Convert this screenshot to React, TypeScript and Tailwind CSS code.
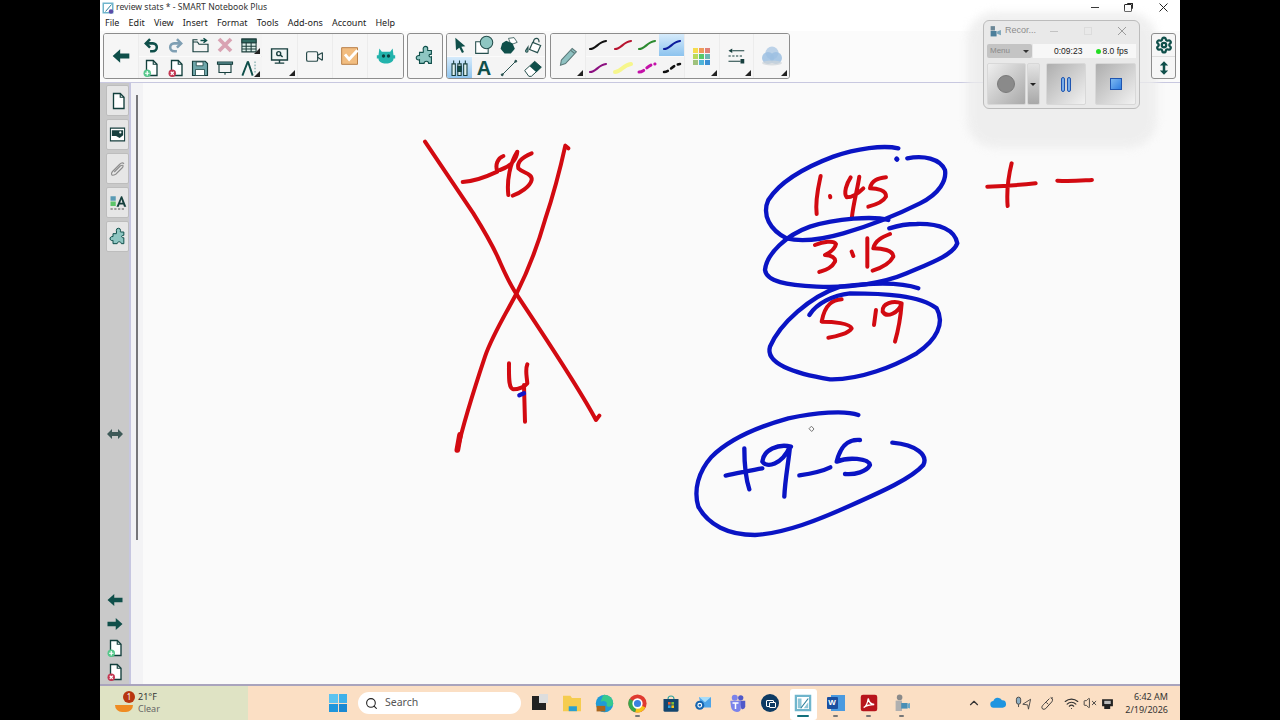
import { ChevronUp, Search, Settings, Video, VolumeX, Wifi } from "lucide-react";
import type { ReactNode } from "react";

const DARK = "#0f4f4a";
const LIGHT = "#8ec6c2";

function Corner() {
  return (
    <span className="absolute right-[2px] bottom-[2px] h-0 w-0 [border-top:6px_solid_transparent] [border-right:6px_solid_#222]" />
  );
}

function Cell({ children, corner, active }: { children: ReactNode; corner?: boolean; active?: boolean }) {
  return (
    <div
      className={
        "relative flex h-[22px] w-[25px] items-center justify-center " +
        (active ? "bg-gradient-to-b from-[#d6ebfb] to-[#8cc3ee]" : "bg-[#f4f4f4]")
      }
    >
      {children}
      {corner && <Corner />}
    </div>
  );
}

function BigCell({ children, corner, w = "w-[35px]" }: { children: ReactNode; corner?: boolean; w?: string }) {
  return (
    <div className={"relative flex h-full items-center justify-center border-r border-[#ececec] bg-[#f6f6f6] last:border-r-0 " + w}>
      {children}
      {corner && <Corner />}
    </div>
  );
}

function Arrow({ size = 18, flip = false }: { size?: number; flip?: boolean }) {
  return (
    <svg width={size} height={size} viewBox="0 0 24 24" className={flip ? "-scale-x-100" : ""}>
      <path d="M2 12 11 4v5h11v6H11v5z" fill={DARK} />
    </svg>
  );
}

function Undo({ color }: { color: string }) {
  return (
    <svg width="17" height="17" viewBox="0 0 24 24" fill="none" stroke={color} strokeWidth="3.6">
      <path d="M10 3 4 9l6 6" />
      <path d="M4 9h10a5.500 5.500 0 0 1 0 11h-4" />
    </svg>
  );
}

function Page({ badge }: { badge?: "add" | "del" }) {
  return (
    <svg width="18" height="18" viewBox="0 0 24 24" fill="none">
      <path d="M6 2h9l5 5v15H6z" fill="#fff" stroke="#123f3c" strokeWidth="1.800" />
      <path d="M15 2v5h5" stroke="#123f3c" strokeWidth="1.500" />
      {badge === "add" && <circle cx="7" cy="19" r="5" fill="#55c78a" />}
      {badge === "add" && <path d="M4 19h6M7 16v6" stroke="#fff" strokeWidth="1.600" />}
      {badge === "del" && <circle cx="7" cy="19" r="5" fill="#c43752" />}
      {badge === "del" && <path d="m5 17 4 4m0-4-4 4" stroke="#fff" strokeWidth="1.600" />}
    </svg>
  );
}

function Puzzle({ size = 22 }: { size?: number }) {
  return (
    <svg width={size} height={size} viewBox="0 0 24 24">
      <path
        d="M10 4a2.500 2.500 0 0 1 5 0c0 1-.5 1.500 0 2h4v4c-1 .6-2-.5-2.600 1-.4 1.500 1.600 2.500 2.600 1.800V20h-3c0-3-5-3-5 0H6v-4c-1 .5-3 .5-3.500-1.500S4 11 6 11.500V8h4c.5-1.500 0-2.500 0-4z"
        fill={LIGHT}
        stroke={DARK}
        strokeWidth="1.200"
      />
    </svg>
  );
}

function Stroke({ color, width = 2.2, dash }: { color: string; width?: number; dash?: string }) {
  return (
    <svg width="20" height="14" viewBox="0 0 20 14" fill="none">
      <path d="M2 11C8 11 10 4 18 3" stroke={color} strokeWidth={width} strokeDasharray={dash} strokeLinecap="round" />
    </svg>
  );
}

function Palette() {
  const colors = ["#f6dc4c", "#ee9a5a", "#df8079", "#b9d95a", "#55c96a", "#6cb6b4", "#9fc27c", "#4fb3d8", "#3b8fd4"];
  return (
    <div className="grid grid-cols-3 gap-[1px]">
      {colors.map((c) => (
        <span key={c} className="h-[5px] w-[5px]" style={{ backgroundColor: c }} />
      ))}
    </div>
  );
}

function TopToolbar() {
  return (
    <div className="flex h-[51px] items-start bg-[#fbfbfb] pt-[2px] pl-[3px]">
      <div className="flex h-[46px] w-[301px] overflow-hidden rounded-[3px] border border-[#8d8d8d]">
        <BigCell>
          <Arrow size={20} />
        </BigCell>
        <div className="grid w-[125px] grid-cols-5 gap-y-[1px] border-r border-[#ececec]">
          <Cell>
            <Undo color={DARK} />
          </Cell>
          <Cell>
            <span className="-scale-x-100">
              <Undo color="#7f9fb3" />
            </span>
          </Cell>
          <Cell>
            <svg width="19" height="18" viewBox="0 0 24 24" fill="none" stroke="#173f3e" strokeWidth="1.600">
              <path d="M2 8h6l2 3h12v10H2zM2 8V5h6" />
              <path d="M12 6h7m-3-3 4 3-4 3" stroke={DARK} strokeWidth="2" />
            </svg>
          </Cell>
          <Cell>
            <svg width="18" height="18" viewBox="0 0 24 24" stroke="#d9a2b2" strokeWidth="5">
              <path d="m4 4 16 16M20 4 4 20" />
            </svg>
          </Cell>
          <Cell corner>
            <svg width="18" height="17" viewBox="0 0 24 24" fill="none" stroke="#1d3f3c" strokeWidth="1.500">
              <path d="M2 3h20v18H2z" fill="#dceee9" />
              <path d="M2 8h20M2 13h20M2 17h20M8 3v18M15 3v18" />
              <path d="M2 3h20v5H2z" fill="#2f6b62" />
            </svg>
          </Cell>
          <Cell>
            <Page badge="add" />
          </Cell>
          <Cell>
            <Page badge="del" />
          </Cell>
          <Cell>
            <svg width="18" height="18" viewBox="0 0 24 24">
              <path d="M2 3h17l3 3v16H2z" fill="#6fa6aa" stroke="#173f3e" strokeWidth="1.500" />
              <path d="M7 4h9v5H7zM6 14h12v8H6z" fill="#fff" stroke="#173f3e" strokeWidth="1" />
            </svg>
          </Cell>
          <Cell>
            <svg width="18" height="18" viewBox="0 0 24 24" fill="none" stroke="#173f3e" strokeWidth="1.500">
              <path d="M2 4h20v3H2z" fill="#6fa6aa" />
              <path d="M4 7h16v11H4zM12 18v3" />
            </svg>
          </Cell>
          <Cell corner>
            <svg width="19" height="19" viewBox="0 0 24 24" fill="none" stroke={DARK} strokeWidth="2.400">
              <path d="M10 3 3 21M10 3l6 18" />
              <path d="M19 3v16" stroke="#9bb" strokeWidth="2" strokeDasharray="2 2" />
            </svg>
          </Cell>
        </div>
        <BigCell corner w="w-[36px]">
          <svg width="19" height="20" viewBox="0 0 24 24" fill="none" stroke="#173f3e" strokeWidth="1.800">
            <path d="M2 3h20v14H2z" fill="#eef5f4" />
            <path d="M12 17v4M6 21h12" />
            <circle cx="11" cy="9" r="2.500" />
            <path d="m13 11 3 2" />
          </svg>
        </BigCell>
        <BigCell>
          <Video size={19} color="#284a4a" strokeWidth={1.500} />
        </BigCell>
        <BigCell w="w-[36px]">
          <svg width="20" height="20" viewBox="0 0 24 24">
            <path d="M2 2h19v20H2z" fill="#f2bd80" stroke="#b9814a" strokeWidth="1.200" />
            <path d="m6 10 5 6 10-11" fill="none" stroke="#fff" strokeWidth="3.500" />
          </svg>
        </BigCell>
        <BigCell>
          <svg width="20" height="20" viewBox="0 0 24 24">
            <path d="M4 3l3 4h10l3-4 1 8h2v4h-2c0 4-4 6-9 6s-9-2-9-6H1v-4h2z" fill="#22b3ac" />
            <circle cx="9" cy="12" r="2" fill="#0d3f3e" />
            <circle cx="15" cy="12" r="2" fill="#0d3f3e" />
          </svg>
        </BigCell>
      </div>
      <div className="ml-[3px] flex h-[46px] w-[36px] items-center justify-center rounded-[3px] border border-[#8d8d8d] bg-[#f6f6f6]">
        <Puzzle />
      </div>
      <div className="ml-[3px] grid h-[46px] w-[100px] grid-cols-4 gap-y-[1px] overflow-hidden rounded-[3px] border border-[#8d8d8d]">
        <Cell>
          <svg width="16" height="18" viewBox="0 0 24 24">
            <path d="M5 1l15 13-6 .5 4 8-3 1.500-4-8-5 4z" fill={DARK} />
          </svg>
        </Cell>
        <Cell>
          <svg width="20" height="20" viewBox="0 0 24 24" stroke="#27504e" strokeWidth="1.300">
            <path d="M2 8h15v14H2z" fill="#fff" />
            <circle cx="15" cy="9" r="7.500" fill={LIGHT} />
          </svg>
        </Cell>
        <Cell>
          <svg width="19" height="19" viewBox="0 0 24 24">
            <path d="M12 3l7-1 4 6-8 3z" fill="#fff" stroke="#27504e" strokeWidth="1" />
            <path d="M9 6l8 3 3 7-5 6H7l-5-6 2-7z" fill={DARK} />
          </svg>
        </Cell>
        <Cell>
          <svg width="19" height="19" viewBox="0 0 24 24" fill="none" stroke="#27504e" strokeWidth="1.500">
            <path d="m11 8 10 4-4 9-10-4z" fill="#fff" />
            <path d="M12 8c0-3 2-5 4-5s3 2 3 5" />
            <path d="M5 14c-2 3-3 4-3 5a1.500 1.500 0 0 0 3 0c0-1 0-3 0-5z" fill={LIGHT} />
          </svg>
        </Cell>
        <Cell active>
          <svg width="21" height="20" viewBox="0 0 24 24" stroke="#173f3e" strokeWidth="1.300">
            <path d="M3 7h4v14H3zM10 7h4v14h-4zM17 7h4v14h-4z" fill="#dff0ee" />
            <path d="M5 7l0-4M12 7V3M19 7V3" />
            <path d="M10 10h4v6h-4z" fill={DARK} />
          </svg>
        </Cell>
        <Cell>
          <span className="text-[20px] leading-none font-bold text-[#0f4f4a] [font-family:'Liberation_Sans',sans-serif]">A</span>
        </Cell>
        <Cell>
          <svg width="18" height="18" viewBox="0 0 24 24" stroke="#27504e" strokeWidth="1.300" fill="#27504e">
            <path d="M3 21 21 3" />
            <circle cx="3" cy="21" r="1.300" />
            <circle cx="21" cy="3" r="1.300" />
          </svg>
        </Cell>
        <Cell>
          <svg width="20" height="20" viewBox="0 0 24 24">
            <path d="M2 15 14 4l8 7-12 11H7z" fill="#fff" stroke="#27504e" strokeWidth="1.200" />
            <path d="M8 10 14 4l8 7-6 6z" fill={DARK} />
          </svg>
        </Cell>
      </div>
      <div className="ml-[4px] flex h-[46px] w-[240px] overflow-hidden rounded-[3px] border border-[#8d8d8d]">
        <BigCell corner>
          <svg width="20" height="22" viewBox="0 0 24 24">
            <path d="M4 17 17 3l5 4L9 21l-6 2z" fill="#8fc2c2" stroke="#5b7a7a" strokeWidth="1.300" />
            <path d="M15 5l5 4" stroke="#5b7a7a" strokeWidth="1.300" />
          </svg>
        </BigCell>
        <div className="grid w-[100px] grid-cols-4 gap-y-[1px] border-r border-[#ececec]">
          <Cell>
            <Stroke color="#111" />
          </Cell>
          <Cell>
            <Stroke color="#b81430" />
          </Cell>
          <Cell>
            <Stroke color="#2c8a30" />
          </Cell>
          <Cell active>
            <Stroke color="#0b1c9c" />
          </Cell>
          <Cell>
            <Stroke color="#8c1080" />
          </Cell>
          <Cell>
            <Stroke color="#f6f68c" width={4} />
          </Cell>
          <Cell>
            <Stroke color="#c411a8" width={3} dash="5 4" />
          </Cell>
          <Cell>
            <Stroke color="#111" width={2.500} dash="4 4" />
          </Cell>
        </div>
        <BigCell corner>
          <Palette />
        </BigCell>
        <BigCell corner>
          <svg width="20" height="18" viewBox="0 0 24 24" stroke="#173f3e" fill="#173f3e">
            <path d="M7 5h16" strokeWidth="1.500" />
            <path d="M7 2 2 5l5 3z" stroke="none" />
            <path d="M2 12h20" strokeWidth="1.500" strokeDasharray="3 2" />
            <path d="M2 19h16" strokeWidth="1.500" />
            <path d="M18 16h5v6h-5z" stroke="none" />
          </svg>
        </BigCell>
        <BigCell corner>
          <svg width="24" height="24" viewBox="0 0 24 24">
            <circle cx="12" cy="9" r="6.500" fill="#bcd2e8" />
            <circle cx="8" cy="14" r="6" fill="#9cc0e2" opacity=".85" />
            <circle cx="16" cy="14" r="6" fill="#9cc0e2" opacity=".85" />
            <ellipse cx="12" cy="19" rx="10" ry="2.500" fill="#cfd4d8" opacity=".7" />
          </svg>
        </BigCell>
      </div>
      <div className="relative z-10 mr-[4px] ml-auto flex h-[46px] w-[25px] flex-col overflow-hidden rounded-[3px] border border-[#8d8d8d] bg-[#f6f6f6]">
        <div className="flex h-[23px] items-center justify-center border-b border-[#dedede]">
          <Settings size={18} color={DARK} strokeWidth={3} />
        </div>
        <div className="flex flex-1 items-center justify-center">
          <svg width="10" height="14" viewBox="0 0 12 16" fill={DARK}>
            <path d="M6 0 11 5H7.500v6H11l-5 5-5-5h3.500V5H1z" />
          </svg>
        </div>
      </div>
    </div>
  );
}

function SideButton({ children }: { children: ReactNode }) {
  return (
    <div className="flex h-[31px] w-[23px] items-center justify-center rounded-[2px] border border-[#bdbdbd] bg-[#e6e6e6]">
      {children}
    </div>
  );
}

function SideStep({ children }: { children: ReactNode }) {
  return <div className="flex h-[24px] items-center justify-center">{children}</div>;
}

function Sidebar() {
  return (
    <aside className="flex w-[31px] flex-col items-center border-r-2 border-[#c6c6e0] bg-[#c9c9c9] pt-[2px]">
      <div className="flex flex-col gap-[3px] pl-[6px]">
        <SideButton>
          <Page />
        </SideButton>
        <SideButton>
          <svg width="17" height="17" viewBox="0 0 24 24">
            <path d="M2 3h20v18H2z" fill="#fff" stroke="#173f3e" strokeWidth="1.500" />
            <path d="M4 6h16v7l-5 4-5-3H4z" fill="#173f3e" />
            <circle cx="16" cy="9" r="1.600" fill="#fff" />
          </svg>
        </SideButton>
        <SideButton>
          <svg width="18" height="18" viewBox="0 0 24 24" fill="none" stroke="#8d8d8d" strokeWidth="1.500">
            <path d="M20 5c-2-2-4-1-6 1L5 15c-2 2-2 4-1 5s3 0 5-1l9-9c1-1 1-3 0-3s-2 0-3 1l-8 8" />
          </svg>
        </SideButton>
        <SideButton>
          <svg width="18" height="20" viewBox="0 0 24 24">
            <path d="M2 3h7v6H2z" fill="#5a9bb5" />
            <path d="M2 10h7v6H2z" fill="#5cc46a" />
            <path d="M2 20h20" stroke="#555" strokeWidth="1.500" strokeDasharray="3 2" />
            <path d="M16 3 10 17h3l1-3h5l1 3h3L17.500 3zM15 11.500l1.500-4.500 1.500 4.500z" fill="#143f3c" fillRule="evenodd" />
          </svg>
        </SideButton>
        <SideButton>
          <Puzzle size={20} />
        </SideButton>
      </div>
      <svg width="16" height="10" viewBox="0 0 16 10" className="mt-[177px]" fill="#3e5a58">
        <path d="M0 5 5 0v3h6V0l5 5-5 5V7H5v3z" />
      </svg>
      <div className="mt-auto flex flex-col items-center pl-[1px]">
        <SideStep>
          <Arrow size={18} />
        </SideStep>
        <SideStep>
          <Arrow size={18} flip />
        </SideStep>
        <SideStep>
          <Page badge="add" />
        </SideStep>
        <SideStep>
          <Page badge="del" />
        </SideStep>
      </div>
    </aside>
  );
}

function Ink() {
  return (
    <svg
      className="pointer-events-none absolute inset-0"
      width="1080"
      height="601"
      viewBox="100 83 1080 601"
      fill="none"
      strokeLinecap="round"
      strokeLinejoin="round"
    >
      <g transform="translate(410 130) scale(.3333)" stroke="#d20a11" strokeWidth="12">
        <path d="M45 35 190 250C215 290 245 340 265 385S295 455 318 490C360 555 500 760 558 870L568 857" />
        <path d="M475 55 466 47C450 120 425 210 405 270 385 340 355 420 320 490 285 555 245 620 225 680 195 770 165 860 142 960" />
        <path d="M150 915 142 960" strokeWidth="17" />
        <path d="M158 156C190 155 230 140 262 125 255 105 262 85 280 78M270 120C300 110 320 90 322 65 300 100 290 150 295 195" />
        <path d="M365 70C340 80 320 95 325 115 340 130 368 130 365 150 360 170 330 190 308 197" />
        <path d="M297 700C297 740 295 775 310 778 325 778 345 770 352 760 350 735 345 720 352 703M342 765 345 875" />
        <path d="M328 796 342 790" stroke="#1414c8" strokeWidth="13" />
      </g>
      <g transform="translate(750 140) scale(.3333)">
        <g stroke="#d20a11" strokeWidth="12">
          <path d="M212 108C205 140 195 180 200 222M240 168 241 172" />
          <path d="M302 112C290 130 280 160 290 172 310 172 325 160 340 145M328 110C322 150 310 190 306 230" />
          <path d="M408 112C385 115 365 120 360 145 380 145 410 150 408 170 400 185 375 195 355 200" />
          <path d="M195 315C220 305 250 300 258 312 255 330 235 340 225 345 245 345 258 355 255 365 245 385 225 390 208 396M305 335 310 348M352 295 352 380" />
          <path d="M420 282C400 290 375 300 370 325 395 325 430 330 430 350 420 370 390 385 368 392" />
          <path d="M275 478C250 480 225 490 215 545 250 545 300 550 305 565 295 580 260 590 235 593M378 510 372 555" />
          <path d="M455 490C430 480 395 490 398 515 410 535 445 520 455 490 452 530 445 570 435 605" />
          <path d="M712 140C760 138 810 135 857 130M785 70C775 110 770 160 773 198M922 122C960 125 990 122 1026 120" />
        </g>
        <g stroke="#0a14c4" strokeWidth="13">
          <path d="M445 25C400 15 320 25 250 50 170 80 90 125 55 180 35 225 60 270 110 295 150 305 210 300 280 280 350 260 440 225 510 190 570 160 590 120 585 90 570 55 520 45 472 55" />
          <path d="M440 57 441 58" strokeWidth="15" />
          <path d="M415 240C370 228 260 235 180 260 110 285 50 340 45 390 50 425 110 435 200 440 300 445 400 430 470 400 540 370 610 345 622 310 615 270 570 250 500 252 470 252 440 258 418 265" />
          <path d="M505 445C450 425 350 430 270 440 180 470 90 550 60 620 45 670 130 700 240 718 330 720 430 680 500 640 560 600 585 550 560 505 510 465 400 460 300 460 250 465 200 490 178 525" />
        </g>
      </g>
      <g transform="translate(685 400) scale(.3333)" stroke="#0a14c4" strokeWidth="13">
        <path d="M520 45C480 30 390 38 310 55 220 80 130 120 80 170 40 215 25 270 40 320 70 375 130 405 210 405 300 400 400 360 500 315 590 275 680 235 715 195 730 165 695 135 622 128" />
        <path d="M122 227C160 220 200 210 232 205M178 145C178 190 182 235 193 268" />
        <path d="M318 140C280 130 235 150 232 185 245 205 290 195 315 140 310 190 300 240 298 290" />
        <path d="M343 226C370 222 410 215 436 202M525 120C500 118 470 125 455 185 490 170 550 175 555 195 545 215 510 225 480 222" />
      </g>
      <path d="M811.700 426.500 814 429 811.700 431.500 809.300 429z" stroke="#777" strokeWidth="1" />
    </svg>
  );
}

function Recorder() {
  return (
    <>
      <div className="absolute top-[12px] left-[867px] h-[136px] w-[190px] rounded-[28px] bg-[#ececec] opacity-80 blur-[4px]" />
      <div className="absolute top-[20px] left-[883px] flex h-[89px] w-[157px] flex-col rounded-[6px] border border-[#bcbcbc] bg-[#e9e9e9] px-[3px] [font-family:'Liberation_Sans',sans-serif]">
        <div className="flex h-[20px] items-center pl-[2px] text-[9px] text-[#8c8c8c]">
          <svg width="13" height="14" viewBox="0 0 24 24">
            <path d="M3 3h8v8H3z" fill="#6b8796" />
            <path d="M3 12h11v10H3z" fill="#4c7f9b" />
            <path d="m15 13 7-3v10l-7-3z" fill="#7aa5ba" />
          </svg>
          <span className="ml-[3px]">Recor...</span>
          <span className="ml-[14px] h-[1px] w-[8px] bg-[#c2c2c2]" />
          <span className="ml-[26px] h-[8px] w-[8px] border border-[#dcdcdc]" />
          <svg width="10" height="10" viewBox="0 0 10 10" className="ml-[25px]" stroke="#9c9c9c">
            <path d="m1 1 8 8M9 1 1 9" />
          </svg>
        </div>
        <div className="mt-[3px] flex h-[14px] items-stretch">
          <div className="flex w-[45px] items-center justify-between rounded-[2px] bg-[#c4c4c4] px-[3px] text-[8px] text-[#8a8a8a]">
            Menu
            <span className="border-x-[3px] border-t-[3px] border-x-transparent border-t-[#333]" />
          </div>
          <div className="ml-[1px] flex flex-1 items-center justify-between bg-[#f7f7f7] pr-[8px] pl-[21px] text-[8.500px] text-[#222]">
            <span>0:09:23</span>
            <span className="flex items-center gap-[1px]">
              <span className="h-[5px] w-[5px] rounded-full bg-[#22dd22]" />
              8.0 fps
            </span>
          </div>
        </div>
        <div className="mt-[5px] flex h-[42px] items-stretch">
          <div className="flex w-[39px] items-center justify-center rounded-[2px] border border-[#d8d8d8] bg-gradient-to-br from-[#efefef] to-[#a9a9a9]">
            <span className="h-[18px] w-[18px] rounded-full border border-[#7a7a7a] bg-[#8a8a8a]" />
          </div>
          <div className="ml-[1px] flex w-[13px] items-center justify-center rounded-[2px] border border-[#d8d8d8] bg-gradient-to-b from-[#e4e4e4] to-[#a8a8a8]">
            <span className="border-x-[3px] border-t-[3px] border-x-transparent border-t-[#222]" />
          </div>
          <div className="ml-[6px] flex w-[41px] items-center justify-center gap-[2px] rounded-[2px] border border-[#d8d8d8] bg-gradient-to-br from-[#aeaeae] to-[#f2f2f2]">
            <span className="h-[15px] w-[4px] rounded-[2px] border border-[#1f55b0] bg-[#79aee8]" />
            <span className="h-[15px] w-[4px] rounded-[2px] border border-[#1f55b0] bg-[#79aee8]" />
          </div>
          <div className="ml-[9px] flex w-[41px] items-center justify-center rounded-[2px] border border-[#d8d8d8] bg-gradient-to-br from-[#aeaeae] to-[#f2f2f2]">
            <span className="h-[12px] w-[12px] border border-[#1f55b0] bg-gradient-to-br from-[#7db8f0] to-[#2f7de0]" />
          </div>
        </div>
      </div>
    </>
  );
}

function WinLogo() {
  return (
    <div className="grid h-[18px] w-[18px] grid-cols-2 gap-[1px]">
      <span className="bg-[#5cc3f0]" />
      <span className="bg-[#3fb1ea]" />
      <span className="bg-[#1f96dc]" />
      <span className="bg-[#1a88d2]" />
    </div>
  );
}

function TaskIcon({ children, running, active }: { children: ReactNode; running?: boolean; active?: boolean }) {
  return (
    <div className="relative flex h-full w-[33px] items-center justify-center">
      {active && <span className="absolute top-[3px] bottom-0 left-[4px] w-[27px] rounded-[3px] bg-white" />}
      <span className="relative flex">{children}</span>
      {running && <span className="absolute bottom-[3px] left-[14px] h-[2px] w-[5px] rounded-full bg-[#777]" />}
      {active && <span className="absolute bottom-[3px] left-[11px] h-[2px] w-[12px] rounded-full bg-[#12707c]" />}
    </div>
  );
}

function Taskbar() {
  return (
    <div className="flex h-[36px] items-stretch border-t-2 border-[#a9a4bd] bg-[#fbdfc4] text-[#333] [font-family:'Noto_Sans',sans-serif]">
      <div className="flex w-[148px] items-center bg-[#dfe3c4] pl-[15px]">
        <div className="relative h-[24px] w-[20px]">
          <span className="absolute top-[14px] left-0 h-[7px] w-[18px] rounded-b-full bg-[#ef8b22]" />
          <span className="absolute top-0 left-[8px] flex h-[12px] w-[12px] items-center justify-center rounded-full bg-[#b8350f] text-[8px] leading-none text-white">
            1
          </span>
        </div>
        <div className="ml-[3px] flex flex-col text-[9px] leading-[12px]">
          <span>21°F</span>
          <span className="text-[#666]">Clear</span>
        </div>
      </div>
      <div className="ml-[81px] flex items-center">
        <WinLogo />
      </div>
      <div className="my-auto ml-[11px] flex h-[22px] w-[163px] items-center rounded-full bg-white pl-[7px] text-[10.500px] text-[#555]">
        <Search size={13} color="#222" strokeWidth={2} />
        <span className="ml-[7px]">Search</span>
      </div>
      <div className="flex pl-[1px]">
        <TaskIcon>
          <span className="relative block h-[14px] w-[14px] bg-[#222]">
            <span className="absolute -top-[2px] -right-[2px] h-[9px] w-[9px] bg-[#ddd]" />
          </span>
        </TaskIcon>
        <TaskIcon>
          <svg width="20" height="18" viewBox="0 0 24 22">
            <path d="M1 2h9l2 3h11v16H1z" fill="#f5cc4f" />
            <path d="M8 15h10v6H8z" fill="#2aa0d0" />
          </svg>
        </TaskIcon>
        <TaskIcon>
          <svg width="19" height="19" viewBox="0 0 24 24">
            <circle cx="12" cy="12" r="11" fill="#1f9bd6" />
            <path d="M12 1a11 11 0 0 1 11 11c0 3-3 4-6 4-2 0-3-2-2-4 0-3-5-4-8-2 2-5 3-9 5-9z" fill="#37c98e" />
            <path d="M2 15h11v7H2z" fill="#a8651e" />
          </svg>
        </TaskIcon>
        <TaskIcon running>
          <svg width="19" height="19" viewBox="0 0 24 24">
            <circle cx="12" cy="12" r="11.500" fill="#e03b30" />
            <path d="M12 12 22 17a11.500 11.500 0 0 1-13 6z" fill="#f5c518" />
            <path d="M12 12 9 23A11.500 11.500 0 0 1 2 6z" fill="#38a84c" />
            <circle cx="12" cy="12" r="5.500" fill="#3b82e0" stroke="#fff" strokeWidth="2" />
          </svg>
        </TaskIcon>
        <TaskIcon>
          <svg width="18" height="19" viewBox="0 0 24 24">
            <path d="M2 6h20v15a2 2 0 0 1-2 2H4a2 2 0 0 1-2-2z" fill="#14466e" />
            <path d="M8 6a4 4 0 0 1 8 0" stroke="#2fa3a0" strokeWidth="1.500" fill="none" />
            <path d="M8 10h3.500v3.500H8z" fill="#e8592c" />
            <path d="M12.500 10H16v3.500h-3.500z" fill="#7cbb3a" />
            <path d="M8 14.500h3.500V18H8z" fill="#2ba2e6" />
            <path d="M12.500 14.500H16V18h-3.500z" fill="#f5c518" />
          </svg>
        </TaskIcon>
        <TaskIcon>
          <svg width="19" height="18" viewBox="0 0 24 24">
            <path d="M6 4h16v14H9z" fill="#4ea4e8" />
            <path d="M6 4l8 7 8-7z" fill="#a8dcf8" />
            <circle cx="7" cy="15" r="6" fill="#1565b0" />
            <circle cx="7" cy="15" r="2.500" fill="none" stroke="#fff" strokeWidth="1.500" />
          </svg>
        </TaskIcon>
        <TaskIcon>
          <svg width="18" height="18" viewBox="0 0 24 24" fill="#5059c9">
            <circle cx="17" cy="5" r="3.500" />
            <circle cx="9" cy="5" r="4" fill="#7b83eb" />
            <path d="M14 9h9v8a4 4 0 0 1-5 3z" />
            <path d="M3 9h14v10a5 5 0 0 1-5 5 8 8 0 0 1-8-7z" fill="#7b83eb" />
            <path d="M6 11h8v2h-3v7H9v-7H6z" fill="#fff" />
          </svg>
        </TaskIcon>
        <TaskIcon>
          <span className="flex h-[18px] w-[18px] items-center justify-center rounded-full bg-[#0d3a63]">
            <span className="relative h-[7px] w-[8px] rounded-[1px] border border-white">
              <span className="absolute top-[1px] left-[2px] h-[6px] w-[7px] rounded-[1px] border border-white bg-[#0d3a63]" />
            </span>
          </span>
        </TaskIcon>
        <TaskIcon active>
          <svg width="18" height="18" viewBox="0 0 24 24">
            <path d="M1 1h22v22H1z" fill="#6fb5cc" />
            <path d="M4 4h16v16H4z" fill="#fff" />
            <path d="M5 19V6h5v13zM13 19l6-8v8z" fill="#8ec6d8" />
            <path d="m9 19 10-13" stroke="#2b7f99" strokeWidth="1.500" />
          </svg>
        </TaskIcon>
        <TaskIcon running>
          <span className="relative block h-[18px] w-[18px]">
            <span className="absolute top-[1px] right-0 h-[16px] w-[14px] bg-[#4a9ae0]" />
            <span className="absolute top-[3px] left-0 flex h-[12px] w-[11px] items-center justify-center rounded-[1px] bg-[#1a4fa0] text-[8px] leading-none font-bold text-white [font-family:'Liberation_Sans',sans-serif]">
              W
            </span>
          </span>
        </TaskIcon>
        <TaskIcon running>
          <svg width="18" height="18" viewBox="0 0 24 24">
            <rect x="1" y="1" width="22" height="22" rx="3" fill="#b8141c" />
            <path d="M5 18c3-1 5-6 6-12 1 5 3 8 8 8-5 0-10 1-14 4z" fill="none" stroke="#fff" strokeWidth="1.800" />
          </svg>
        </TaskIcon>
        <TaskIcon running>
          <svg width="16" height="20" viewBox="0 0 20 24">
            <circle cx="7" cy="5" r="3.500" fill="#8a8a8a" />
            <path d="M2 9h8v13H2z" fill="#b0b0b0" />
            <path d="M9 12h8v7H9z" fill="#4a8fb5" />
            <path d="m17 13 3-1v7l-3-1z" fill="#6da8c8" />
          </svg>
        </TaskIcon>
      </div>
      <div className="ml-auto flex items-center text-[#333]">
        <ChevronUp size={14} strokeWidth={2} />
        <svg width="16" height="12" viewBox="0 0 24 16" className="ml-[9px]">
          <path d="M6 15a5 5 0 0 1-1-10 7 7 0 0 1 13-1 5.500 5.500 0 0 1 1 11z" fill="#1f95e0" />
        </svg>
        <svg width="17" height="15" viewBox="0 0 24 20" fill="none" stroke="#444" strokeWidth="1.300" className="ml-[9px]">
          <rect x="2" y="1" width="6" height="10" rx="3" fill="#8fb0c4" />
          <path d="M5 11v4M22 4 11 11l7 1 1 6z" />
        </svg>
        <svg width="15" height="16" viewBox="0 0 24 24" fill="none" stroke="#333" strokeWidth="1.500" className="ml-[8px]">
          <path d="M17 3c3 1 4 4 2 7L9 21c-3 2-6 1-6-2 0-2 2-4 4-6l8-8M10 11l3 3M20 3l-2 2" />
        </svg>
        <Wifi size={15} strokeWidth={1.800} className="ml-[9px]" />
        <VolumeX size={14} strokeWidth={1.500} className="ml-[4px]" />
        <svg width="13" height="13" viewBox="0 0 24 24" className="ml-[4px]">
          <path d="M2 4h20v13h-5v5H6v-5H2z" fill="#222" />
          <path d="M6 7h12v6H6z" fill="#bbb" />
        </svg>
        <div className="mr-[12px] ml-[11px] flex flex-col items-end text-[9px] leading-[13px]">
          <span>6:42 AM</span>
          <span>2/19/2026</span>
        </div>
      </div>
    </div>
  );
}

export default function App() {
  return (
    <div className="flex h-[720px] w-[1280px] justify-center overflow-hidden bg-black [font-family:'Noto_Sans',sans-serif]">
      <div className="relative flex w-[1080px] flex-col bg-white">
        <div className="flex h-[15px] items-center pl-[2px] text-[8.600px] text-[#333]">
          <svg width="12" height="12" viewBox="0 0 24 24">
            <path d="M1 1h22v22H1z" fill="#6fb5cc" />
            <path d="M4 4h16v16H4z" fill="#fff" />
            <path d="m7 19 12-14" stroke="#2b7f99" strokeWidth="2" />
            <circle cx="18" cy="19" r="4.500" fill="#5a4ba8" />
          </svg>
          <span className="ml-[2px]">review stats * - SMART Notebook Plus</span>
          <div className="ml-auto flex items-center">
            <span className="h-[1px] w-[8px] bg-[#222]" />
            <span className="relative ml-[25px] h-[8px] w-[8px] rounded-[1px] border border-[#222]">
              <span className="absolute -top-[2px] -right-[2px] h-[6px] w-[6px] rounded-[1px] border-t border-r border-[#222]" />
            </span>
            <svg width="9" height="9" viewBox="0 0 9 9" className="mr-[12px] ml-[27px]" stroke="#222">
              <path d="m.5.500 8 8M8.500.500l-8 8" />
            </svg>
          </div>
        </div>
        <div className="flex h-[16px] items-center gap-[9.200px] pl-[5px] text-[9px] text-[#222]">
          <span>File</span>
          <span>Edit</span>
          <span>View</span>
          <span>Insert</span>
          <span>Format</span>
          <span>Tools</span>
          <span>Add-ons</span>
          <span>Account</span>
          <span>Help</span>
        </div>
        <TopToolbar />
        <div className="relative flex flex-1 border-t border-[#c8c8e0]">
          <Sidebar />
          <div className="flex w-[12px] justify-center bg-[#f3f3f5] pt-[12px] pb-[144px]">
            <span className="w-[2px] bg-[#77777a]" />
          </div>
          <div className="flex-1 bg-[#fafafa]" />
          <Ink />
        </div>
        <Taskbar />
        <Recorder />
      </div>
    </div>
  );
}
